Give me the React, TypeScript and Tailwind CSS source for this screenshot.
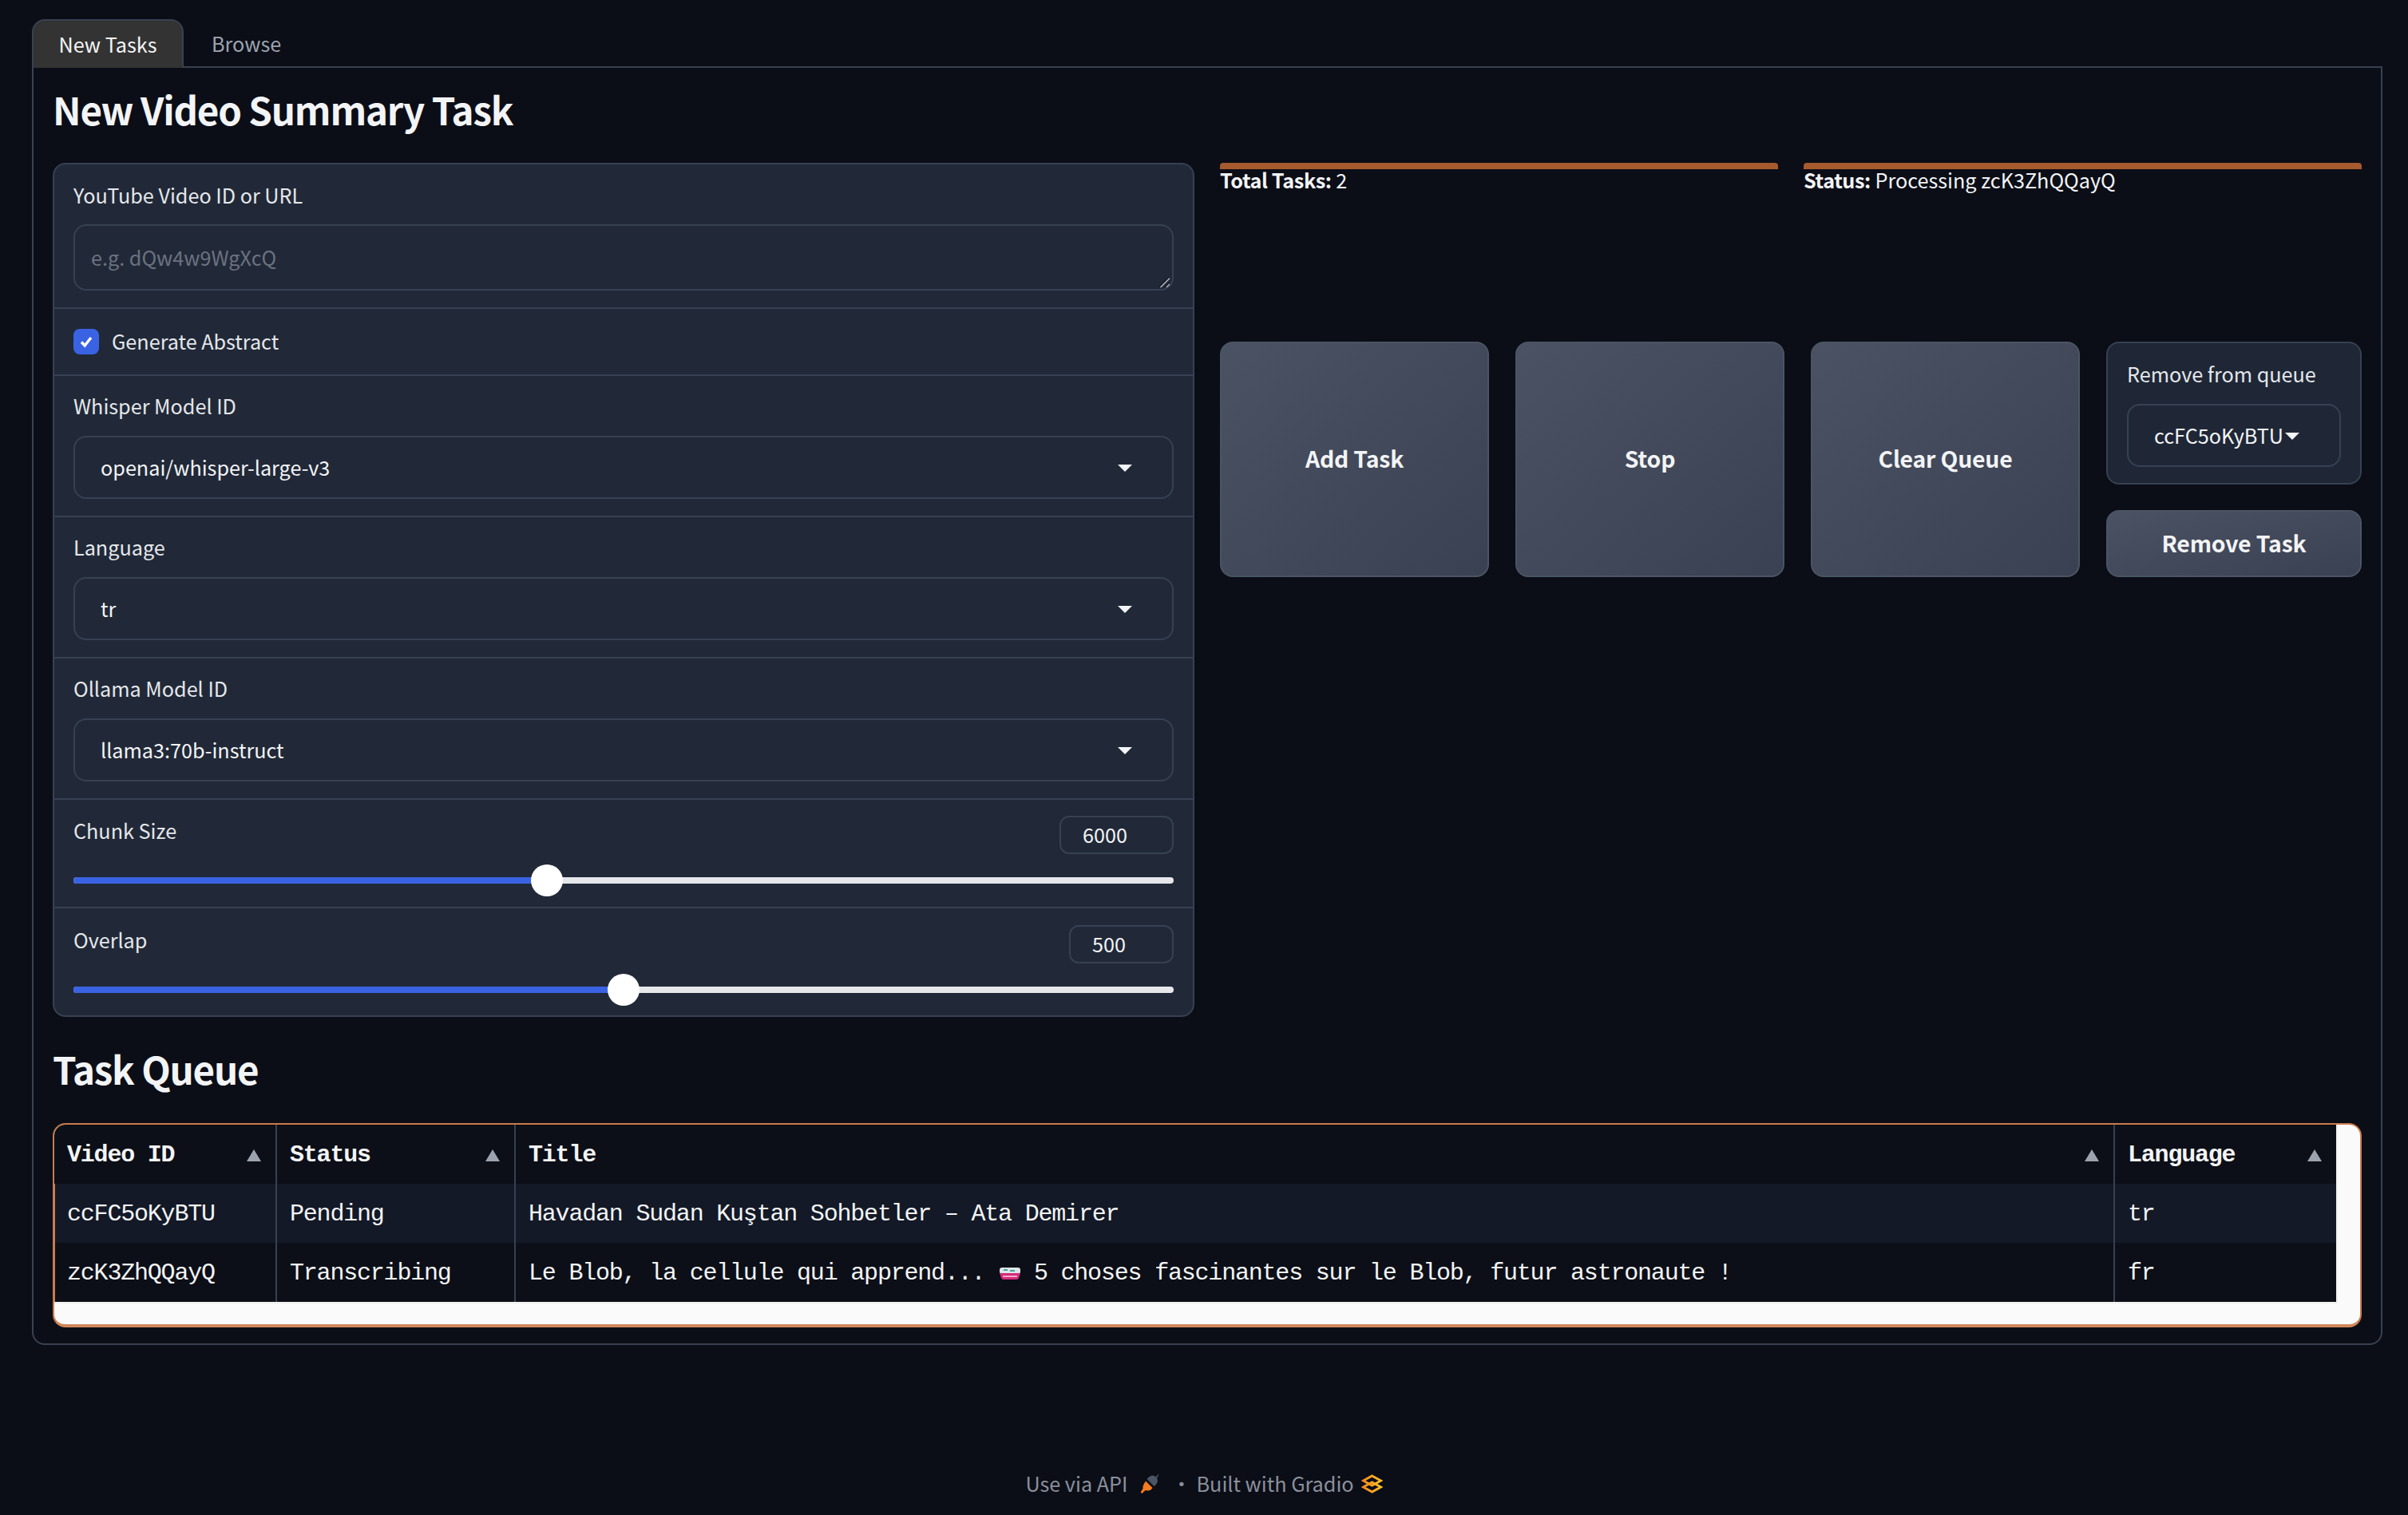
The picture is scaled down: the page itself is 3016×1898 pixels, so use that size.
import React from "react";

const Tri = () => (
  <svg width="18" height="15" viewBox="0 0 18 15" className="shrink-0"><path d="M9 0 L18 15 L0 15 Z" fill="#9ca3af" /></svg>
);
const Caret = () => (
  <svg width="18" height="9" viewBox="0 0 18 9" className="shrink-0 translate-y-[1px]"><path d="M0 0 L18 0 L9 9 Z" fill="#f3f4f6" /></svg>
);

const Dropdown = ({ label, value }: { label: string; value: string }) => (
  <div className="border-t-2 border-[#374151] pt-[19px] pb-[21px] px-[24px]">
    <div className="h-[40px] leading-[37px] text-[25.2px] text-[#e5e7eb]">{label}</div>
    <div className="mt-[16px] h-[79px] flex items-center justify-between border-2 border-[#374151] rounded-[16px] pl-[32px] pr-[50px] text-[25.2px] text-[#f3f4f6]">
      <span>{value}</span>
      <Caret />
    </div>
  </div>
);

const Slider = ({ label, value, boxW, fillW, top }: { label: string; value: string; boxW: string; fillW: string; top: string }) => (
  <div className={`border-t-2 border-[#374151] ${top} pb-[29px] px-[24px]`}>
    <div className="flex justify-between items-start h-[48px]">
      <span className="h-[40px] leading-[36px] text-[25.2px] text-[#e5e7eb]">{label}</span>
      <div className={`${boxW} h-[48px] border-2 border-[#374151] rounded-[12px] pl-[27px] flex items-center text-[25.2px] text-[#f3f4f6]`}>{value}</div>
    </div>
    <div className="relative h-[8px] mt-[29px] bg-[#e5e7eb] rounded-full">
      <div className={`${fillW} h-[8px] bg-[#3a63e4] rounded-l-full`} />
      <div className={`absolute top-[-16px] ${fillW === "w-[593px]" ? "left-[573px]" : "left-[669px]"} w-[40px] h-[40px] rounded-full bg-white`} />
    </div>
  </div>
);

const ActionButton = ({ children, cls }: { children: React.ReactNode; cls: string }) => (
  <div className={`${cls} flex items-center justify-center rounded-[16px] border-2 border-[#4b5563] bg-gradient-to-br from-[#4b5263] to-[#3a4152] text-[28.4px] tracking-[-0.2px] font-bold text-[#f3f4f6]`}>
    <span className="-translate-y-[1px]">{children}</span>
  </div>
);

const Th = ({ children, first }: { children: React.ReactNode; first?: boolean }) => (
  <th className={`pl-[16px] ${first ? "" : "border-l-2 border-[#374151]"} pr-[18px] pt-[2px] h-[74px] font-bold`}>
    <div className="flex items-center justify-between text-[#f3f4f6]"><span>{children}</span><Tri /></div>
  </th>
);

const Td = ({ children, first }: { children: React.ReactNode; first?: boolean }) => (
  <td className={`pl-[16px] pt-[3px] ${first ? "shadow-[inset_1px_0_0_#c97b4b]" : "border-l-2 border-[#374151]"} h-[74px] font-normal whitespace-nowrap text-[#f3f4f6]`}>{children}</td>
);

const PetriDish = () => (
  <svg width="32" height="16" viewBox="0 0 32 16" className="inline-block align-[-1px] -ml-[1px] -mr-[3px]">
    <rect x="3" y="0" width="26" height="8" rx="3" fill="#dfe5e6" />
    <path d="M8 3h5M16 4h6" stroke="#3fa7a3" strokeWidth="2" />
    <path d="M3 7h26l-2 6a3 3 0 0 1-3 2H8a3 3 0 0 1-3-2z" fill="#d22b7c" />
    <rect x="7" y="10" width="18" height="2" fill="#f7a9cb" />
  </svg>
);

export default function App() {
  return (
    <div className="min-h-[1898px] w-[3016px] bg-[#0b0e17] font-['Noto_Sans_CJK_SC','Noto_Sans',sans-serif]">
      <div className="pt-[24px] pl-[40px] pr-[32px]">
        <div className="flex h-[59px] text-[25.2px] leading-[36px]">
          <div className="w-[190px] border-2 border-b-0 border-[#374151] rounded-t-[16px] bg-[#333333] text-[#f3f4f6] flex items-center justify-center pb-[2px] mb-[-2px] relative z-10">New Tasks</div>
          <div className="pl-[35px] flex items-center text-[#9ca3af]">Browse</div>
        </div>
        <div className="h-[1602px] border-2 border-[#374151] rounded-b-[16px] px-[24px]">
          <h1 className="mt-[17px] h-[70px] leading-[70px] text-[47.5px] tracking-[-1.2px] font-bold text-[#f3f4f6] mb-[32px]">New Video Summary Task</h1>
          <div className="flex gap-[32px]">
            <div className="w-[1430px] h-[1070px] border-2 border-[#374151] rounded-[16px] bg-[#212938] overflow-hidden">
              <div className="pt-[20px] pb-[21px] px-[24px]">
                <div className="h-[40px] leading-[36px] text-[25.2px] text-[#e5e7eb]">YouTube Video ID or URL</div>
                <div className="relative mt-[15px]">
                  <textarea readOnly placeholder="e.g. dQw4w9WgXcQ" className="block resize-none w-full h-[83px] border-2 border-[#374151] rounded-[16px] bg-transparent px-[20px] py-[21px] text-[25.2px] leading-[36px] outline-none placeholder:text-[#6b7280]" />
                  <svg width="16" height="16" viewBox="0 0 16 16" className="absolute right-[3px] bottom-[2px]">
                    <path d="M1.5 14 L14 1.5 M9.5 14 L14 9.5" stroke="#14181f" strokeWidth="3" />
                    <path d="M2.5 14 L14 2.5 M10 14 L14 10" stroke="#b4b8c0" strokeWidth="1.6" />
                  </svg>
                </div>
              </div>
              <div className="border-t-2 border-[#374151] h-[84px] px-[24px] flex items-center gap-[16px]">
                <div className="w-[32px] h-[32px] rounded-[8px] bg-[#3a63e4] flex items-center justify-center">
                  <svg width="20" height="20" viewBox="0 0 20 20"><path d="M4 10.5 L8.2 15 L16 5" fill="none" stroke="white" strokeWidth="3.4" /></svg>
                </div>
                <span className="text-[25.2px] text-[#e5e7eb]">Generate Abstract</span>
              </div>
              <Dropdown label="Whisper Model ID" value="openai/whisper-large-v3" />
              <Dropdown label="Language" value="tr" />
              <Dropdown label="Ollama Model ID" value="llama3:70b-instruct" />
              <Slider label="Chunk Size" value="6000" boxW="w-[143px]" fillW="w-[593px]" top="pt-[20px]" />
              <Slider label="Overlap" value="500" boxW="w-[131px]" fillW="w-[689px]" top="pt-[21px]" />
            </div>
            <div className="flex-1">
              <div className="flex gap-[32px]">
                {[["Total Tasks:", "2"], ["Status:", "Processing zcK3ZhQQayQ"]].map(([k, v]) => (
                  <div key={k} className="flex-1">
                    <div className="h-[8px] rounded-t-[4px] bg-[#a65a2d]" />
                    <div className="h-[30px] leading-[26px] text-[25.2px] text-[#f3f4f6]"><b className="tracking-[-0.4px]">{k}</b> {v}</div>
                  </div>
                ))}
              </div>
              <div className="mt-[186px] flex gap-[33px] h-[295px]">
                <ActionButton cls="w-[337px]">Add Task</ActionButton>
                <ActionButton cls="w-[337px]">Stop</ActionButton>
                <ActionButton cls="w-[337px]">Clear Queue</ActionButton>
                <div className="flex-1 flex flex-col gap-[32px]">
                  <div className="h-[179px] border-2 border-[#374151] rounded-[16px] bg-[#1f2737] px-[24px] pt-[20px]">
                    <div className="h-[40px] leading-[36px] text-[25.2px] text-[#e5e7eb]">Remove from queue</div>
                    <div className="mt-[16px] h-[79px] border-2 border-[#374151] rounded-[16px] pl-[32px] flex items-center gap-[2px] text-[25.2px] text-[#f3f4f6]">
                      ccFC5oKyBTU<Caret />
                    </div>
                  </div>
                  <ActionButton cls="h-[84px]">Remove Task</ActionButton>
                </div>
              </div>
            </div>
          </div>
          <h2 className="mt-[30px] h-[70px] leading-[70px] text-[47.5px] tracking-[-1.2px] font-bold text-[#f3f4f6]">Task Queue</h2>
          <div className="mt-[33px] h-[256px] border-2 border-b-[4px] border-[#c97b4b] border-b-[#d0875a] rounded-[16px] bg-[#fafafa] overflow-hidden">
            <div className="w-[2860px] border-r-2 border-b-2 border-[#f0f0f0]">
              <table className="table-fixed border-collapse w-[2858px] font-['Liberation_Mono',monospace] text-[30px] tracking-[-1.2px] text-left">
                <colgroup>
                  <col className="w-[278px]" />
                  <col className="w-[299px]" />
                  <col className="w-[2003px]" />
                  <col className="w-[278px]" />
                </colgroup>
                <thead className="bg-[#0c0f17]">
                  <tr><Th first>Video ID</Th><Th>Status</Th><Th>Title</Th><Th>Language</Th></tr>
                </thead>
                <tbody>
                  <tr className="bg-[#131926]">
                    <Td first>ccFC5oKyBTU</Td><Td>Pending</Td><Td>Havadan Sudan Kuştan Sohbetler – Ata Demirer</Td><Td>tr</Td>
                  </tr>
                  <tr className="bg-[#0c0f17]">
                    <Td first>zcK3ZhQQayQ</Td><Td>Transcribing</Td><Td>Le Blob, la cellule qui apprend... <PetriDish /> 5 choses fascinantes sur le Blob, futur astronaute !</Td><Td>fr</Td>
                  </tr>
                </tbody>
              </table>
            </div>
          </div>
        </div>
      </div>
      <div className="mt-[162px] flex items-center justify-center h-[24px] text-[25.2px] text-[#8b909c]">
        <span>Use via API</span>
        <svg width="24" height="24" viewBox="0 0 24 24" className="ml-[16px]">
          <path d="M8.5 6 Q12 1.5 16 1.5 L19.5 3 L23 0 L23.5 0.5 L21 4.5 L22 8 Q21.5 12 17.5 15 Z" fill="#4b5563" />
          <path d="M7 8.5 L15.5 17 Q13 21 8.5 20.5 L6.5 20 L2.5 24 L0.5 22.5 L3.5 18 Q2.5 15 7 8.5Z" fill="#f47b20" />
        </svg>
        <span className="ml-[15px]">·</span>
        <span className="ml-[6px]">Built with Gradio</span>
        <svg width="27" height="24" viewBox="0 0 27 24" className="ml-[9px]">
          <defs>
            <linearGradient id="g1" x1="0" y1="0" x2="1" y2="0">
              <stop offset="0" stopColor="#f58a1f" />
              <stop offset="1" stopColor="#fbbf24" />
            </linearGradient>
          </defs>
          <path d="M13.5 2 L24.5 8 L13.5 14 L2.5 8Z" fill="none" stroke="url(#g1)" strokeWidth="3" />
          <path d="M13.5 10 L24.5 16 L13.5 22 L2.5 16Z" fill="none" stroke="url(#g1)" strokeWidth="3" />
        </svg>
      </div>
    </div>
  );
}
